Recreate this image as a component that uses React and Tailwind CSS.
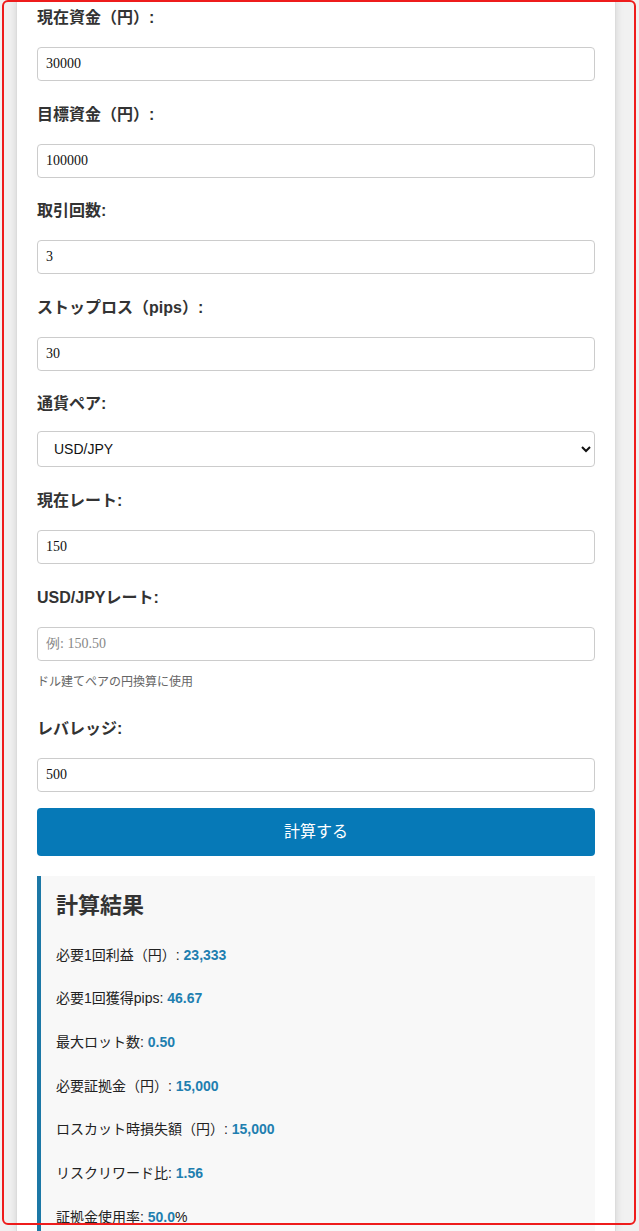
import { useState } from "react";

const fields = [
  { label: "現在資金（円）:", value: "30000" },
  { label: "目標資金（円）:", value: "100000" },
  { label: "取引回数:", value: "3" },
  { label: "ストップロス（pips）:", value: "30" },
];

const results = [
  { label: "必要1回利益（円）: ", value: "23,333" },
  { label: "必要1回獲得pips: ", value: "46.67" },
  { label: "最大ロット数: ", value: "0.50" },
  { label: "必要証拠金（円）: ", value: "15,000" },
  { label: "ロスカット時損失額（円）: ", value: "15,000" },
  { label: "リスクリワード比: ", value: "1.56" },
  { label: "証拠金使用率: ", value: "50.0", suffix: "%" },
];

const labelCls = "block text-[16px] leading-6 font-bold text-[#333]";
const inputCls =
  "block w-full h-[34px] px-2 border border-[#ccc] rounded-[4px] bg-white text-[14px] text-[#111] outline-none [font-family:'Liberation_Serif',serif]";

function Field({ label, value, placeholder, onChange, className = "mb-[21.6px]" }) {
  return (
    <div className={className}>
      <label className={`${labelCls} mb-[17px]`}>{label}</label>
      <input
        type="text"
        value={value}
        placeholder={placeholder}
        onChange={onChange}
        className={`${inputCls} placeholder:text-[#888]`}
      />
    </div>
  );
}

export default function App() {
  const [pair, setPair] = useState("USD/JPY");

  return (
    <div className="relative w-[639px] h-[1231px] overflow-hidden bg-[#f1f1f1] pl-4 [font-family:'Liberation_Sans','Noto_Sans_CJK_JP',sans-serif]">
      {/* Main card */}
      <div className="w-[600px] h-full bg-white border-x border-[#dcdcdc] shadow-[0_0_8px_rgba(0,0,0,0.12)] px-5 pt-[6px]">
        {fields.map((f) => (
          <Field key={f.label} label={f.label} value={f.value} onChange={() => {}} />
        ))}

        {/* Currency pair */}
        <div className="mb-[21.6px]">
          <label className={`${labelCls} mb-[15px]`}>通貨ペア:</label>
          <select
            value={pair}
            onChange={(e) => setPair(e.target.value)}
            className="block w-full h-[36px] pl-3 pr-1 border border-[#ccc] rounded-[4px] bg-white text-[14px] text-[#111] outline-none"
          >
            <option>USD/JPY</option>
            <option>EUR/JPY</option>
            <option>GBP/JPY</option>
            <option>EUR/USD</option>
          </select>
        </div>

        <Field label="現在レート:" value="150" onChange={() => {}} />

        <div className="mb-[27px]">
          <label className={`${labelCls} mb-[17px]`}>USD/JPYレート:</label>
          <input type="text" placeholder="例: 150.50" className={`${inputCls} placeholder:text-[#888]`} />
          <p className="mt-[13px] text-[12px] leading-4 text-[#666]">ドル建てペアの円換算に使用</p>
        </div>

        <Field label="レバレッジ:" value="500" onChange={() => {}} className="mb-4" />

        <button className="w-full h-12 rounded-[4px] bg-[#0679b7] text-white text-[16px]">
          計算する
        </button>

        {/* Results */}
        <div className="mt-5 bg-[#f8f8f8] border-l-4 border-[#1c78a6] px-[15px] pt-[15px] pb-6">
          <h2 className="text-[22px] leading-[30px] font-bold text-[#333]">計算結果</h2>
          <div className="mt-6 flex flex-col gap-[23.7px]">
            {results.map((r) => (
              <p key={r.label} className="text-[14px] leading-5 text-[#222]">
                {r.label}
                <span className="font-bold text-[#1f7fb0]">{r.value}</span>
                {r.suffix}
              </p>
            ))}
          </div>
        </div>
      </div>

      {/* Red highlight frame */}
      <div className="absolute left-[2px] top-0 w-[634px] h-[1225px] border-2 border-[#ee1c1c] rounded-md pointer-events-none" />
    </div>
  );
}
